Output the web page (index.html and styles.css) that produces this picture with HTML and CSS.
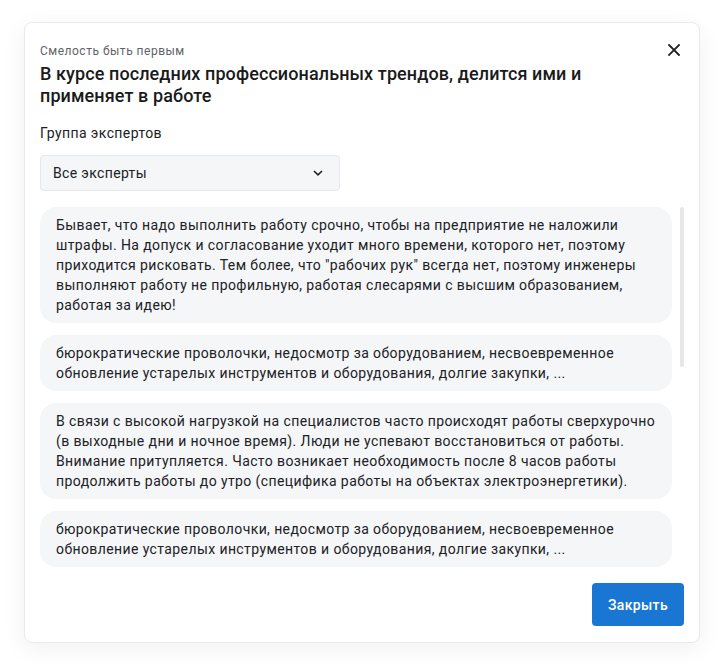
FILE: index.html
```html
<!DOCTYPE html>
<html lang="ru">
<head>
<meta charset="utf-8">
<title>Группа экспертов</title>
<link rel="stylesheet" href="styles.css">
</head>
<body>
<div class="dialog">
  <div class="header">
    <div class="titles">
      <div class="subtitle">Смелость быть первым</div>
      <h1 class="title">В курсе последних профессиональных трендов, делится ими и применяет в работе</h1>
    </div>
    <button class="close" aria-label="Закрыть">
      <svg width="12" height="12" viewBox="0 0 12 12"><path d="M1 1L11 11M11 1L1 11" stroke="#202124" stroke-width="1.8" stroke-linecap="square" fill="none"/></svg>
    </button>
  </div>
  <div class="label">Группа экспертов</div>
  <div class="select">
    <span>Все эксперты</span>
    <svg width="10" height="6" viewBox="0 0 10 6"><path d="M1 1L5 4.8L9 1" stroke="#202124" stroke-width="1.6" fill="none"/></svg>
  </div>
  <div class="scroll-area">
    <div class="messages">
      <div class="bubble">Бывает, что надо выполнить работу срочно, чтобы на предприятие не наложили штрафы. На допуск и согласование уходит много времени, которого нет, поэтому приходится рисковать. Тем более, что "рабочих рук" всегда нет, поэтому инженеры выполняют работу не профильную, работая слесарями с высшим образованием, работая за идею!</div>
      <div class="bubble">бюрократические проволочки, недосмотр за оборудованием, несвоевременное обновление устарелых инструментов и оборудования, долгие закупки, ...</div>
      <div class="bubble">В связи с высокой нагрузкой на специалистов часто происходят работы сверхурочно (в выходные дни и ночное время). Люди не успевают восстановиться от работы. Внимание притупляется. Часто возникает необходимость после 8 часов работы продолжить работы до утро (специфика работы на объектах электроэнергетики).</div>
      <div class="bubble">бюрократические проволочки, недосмотр за оборудованием, несвоевременное обновление устарелых инструментов и оборудования, долгие закупки, ...</div>
    </div>
    <div class="scrollbar"><div class="thumb"></div></div>
  </div>
  <div class="footer">
    <button class="btn">Закрыть</button>
  </div>
</div>
</body>
</html>
```
FILE: styles.css
```css
* { box-sizing: border-box; }
html, body { margin: 0; padding: 0; background: #ffffff; }
body {
  font-family: Roboto, "Noto Sans", "Liberation Sans", sans-serif;
  color: #202124;
  padding: 22px 24px;
}
.dialog {
  width: 676px;
  background: #ffffff;
  border: 1px solid #e9eaec;
  border-radius: 8px;
  box-shadow: 0 6px 24px rgba(0, 0, 0, 0.06);
  padding: 20px 15px 16px 15px;
  display: flex;
  flex-direction: column;
}
.header {
  display: flex;
  justify-content: space-between;
  align-items: flex-start;
}
.subtitle {
  font-size: 12px;
  line-height: 16px;
  color: #5f6368;
  letter-spacing: 0.5px;
}
.title {
  margin: 4px 0 0 0;
  font-size: 18px;
  line-height: 22px;
  font-weight: 500;
  letter-spacing: 0.1px;
  color: #1a1a1a;
}
.close {
  border: 0;
  background: transparent;
  padding: 0;
  width: 24px;
  height: 24px;
  display: flex;
  align-items: center;
  justify-content: center;
  margin: -5px 0 0 0;
  cursor: pointer;
}
.label {
  margin-top: 16px;
  font-size: 14px;
  line-height: 20px;
  letter-spacing: 0.4px;
  color: #202124;
}
.select {
  margin-top: 12px;
  width: 300px;
  height: 36px;
  background: #f5f6f8;
  border: 1px solid #e6e8eb;
  border-radius: 4px;
  display: flex;
  align-items: center;
  justify-content: space-between;
  padding: 0 16px 0 12px;
  font-size: 14px;
  letter-spacing: 0.35px;
}
.scroll-area {
  margin-top: 16px;
  height: 360px;
  display: flex;
  gap: 8px;
}
.messages {
  flex: 1;
  overflow: hidden;
  display: flex;
  flex-direction: column;
  gap: 12px;
}
.scrollbar {
  width: 4px;
  flex: none;
}
.thumb {
  height: 160px;
  background: #e6e7ea;
  border-radius: 2px;
}
.bubble {
  flex: none;
  background: #f5f6f8;
  border-radius: 16px;
  padding: 8px 16px;
  font-size: 14px;
  line-height: 20px;
  letter-spacing: 0.4px;
  color: #202124;
}
.footer {
  margin-top: 16px;
  display: flex;
  justify-content: flex-end;
}
.btn {
  border: 0;
  background: #1976d2;
  color: #ffffff;
  font-family: inherit;
  font-size: 14px;
  font-weight: 500;
  letter-spacing: 0.35px;
  height: 43px;
  padding: 0 16px;
  border-radius: 4px;
  cursor: pointer;
}
```
